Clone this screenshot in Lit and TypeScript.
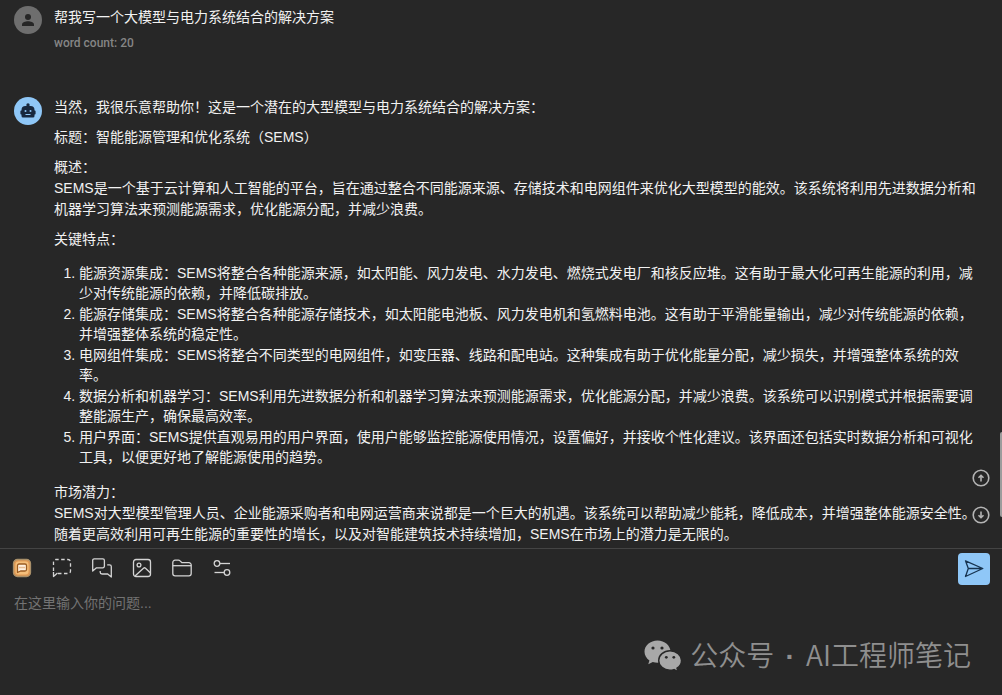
import { LitElement, html, css, svg } from "lit";
import { customElement, property } from "lit/decorators.js";

const FEATURES = [
  "能源资源集成：SEMS将整合各种能源来源，如太阳能、风力发电、水力发电、燃烧式发电厂和核反应堆。这有助于最大化可再生能源的利用，减少对传统能源的依赖，并降低碳排放。",
  "能源存储集成：SEMS将整合各种能源存储技术，如太阳能电池板、风力发电机和氢燃料电池。这有助于平滑能量输出，减少对传统能源的依赖，并增强整体系统的稳定性。",
  "电网组件集成：SEMS将整合不同类型的电网组件，如变压器、线路和配电站。这种集成有助于优化能量分配，减少损失，并增强整体系统的效率。",
  "数据分析和机器学习：SEMS利用先进数据分析和机器学习算法来预测能源需求，优化能源分配，并减少浪费。该系统可以识别模式并根据需要调整能源生产，确保最高效率。",
  "用户界面：SEMS提供直观易用的用户界面，使用户能够监控能源使用情况，设置偏好，并接收个性化建议。该界面还包括实时数据分析和可视化工具，以便更好地了解能源使用的趋势。",
];

const TOOLS = [
  {
    label: "截图提问",
    shape: svg`<path d="M1.500 13V4a2.500 2.500 0 0 1 2.500-2.500H16A2.500 2.500 0 0 1 18.500 4v9a2.500 2.500 0 0 1-2.500 2.500H6" stroke-dasharray="3.500 2.500"/><path d="M1.500 14v4.500L5.500 15"/>`,
  },
  {
    label: "会话",
    shape: svg`<path d="M2.200.8h8.600a1.600 1.600 0 0 1 1.600 1.600v5.800a1.600 1.600 0 0 1-1.600 1.600H4.500L.7 13V2.300A1.500 1.500 0 0 1 2.200.8z"/><path d="M15.200 6.800h2.300a1.800 1.800 0 0 1 1.800 1.800V19l-3.600-3H10a1.800 1.800 0 0 1-1.800-1.800V13"/>`,
  },
  {
    label: "图片",
    shape: svg`<rect x="1.500" y="1.500" width="17" height="17" rx="2.500"/><circle cx="7" cy="7" r="1.900"/><path d="M3 18l8.500-7.800a1.500 1.500 0 0 1 2 0L18.500 15"/>`,
  },
  {
    label: "文件",
    shape: svg`<path d="M.8 15.500v-11A2.300 2.300 0 0 1 3.100 2.200h3.300c.7 0 1.200.2 1.700.7L10 4.700h6.900A2.300 2.300 0 0 1 19.200 7v8.500a2.300 2.300 0 0 1-2.300 2.300H3.100A2.300 2.300 0 0 1 .8 15.500z"/><path d="M.8 7.700h18.400"/>`,
  },
  {
    label: "设置",
    shape: svg`<circle cx="5" cy="5.500" r="2.800"/><path d="M7.800 5.500H18"/><circle cx="15" cy="14.500" r="2.800"/><path d="M2.500 14.500h9.700"/>`,
  },
];

@customElement("chat-turn")
export class ChatTurn extends LitElement {
  @property() role = "user";

  static styles = css`
    :host {
      display: grid;
      grid-template-columns: 28px minmax(0, 1fr);
      column-gap: 12px;
      align-items: start;
    }
    .avatar {
      width: 28px;
      height: 28px;
      border-radius: 50%;
      background: #6e6e6e;
      color: #262626;
      display: grid;
      place-items: center;
    }
    .bot {
      background: #8fc7f7;
      color: #17283f;
    }
  `;

  render() {
    const bot = this.role === "bot";
    return html`
      <div class="avatar ${bot ? "bot" : ""}">
        ${bot
          ? html`<svg width="18" height="18" viewBox="0 0 18 18" aria-hidden="true">
              <circle cx="9" cy="3" r="1.700" fill="currentColor" />
              <path fill="currentColor" d="M8.200 3h1.600v1h1.700a4 4 0 0 1 4 4v.5h.3a.8.8 0 0 1 .8.8v2.400a.8.8 0 0 1-.8.8h-.3v1.500a1.500 1.500 0 0 1-1.500 1.500H4a1.500 1.500 0 0 1-1.500-1.500v-1.500h-.3a.8.8 0 0 1-.8-.8V9.300a.8.8 0 0 1 .8-.8h.3V8a4 4 0 0 1 4-4h1.700z" />
              <circle cx="6.500" cy="9" r="1" fill="#8fc7f7" />
              <circle cx="11.500" cy="9" r="1" fill="#8fc7f7" />
              <path d="M6.500 12.500h5" stroke="#8fc7f7" />
            </svg>`
          : html`<svg width="16" height="16" viewBox="0 0 16 16" fill="currentColor" aria-hidden="true">
              <circle cx="8" cy="5" r="3" />
              <path d="M2 14v-1.500C2 10.500 5.500 9.300 8 9.300s6 1.200 6 3.200V14z" />
            </svg>`}
      </div>
      <div><slot></slot></div>
    `;
  }
}

@customElement("chat-composer")
export class ChatComposer extends LitElement {
  static styles = css`
    :host {
      display: block;
      border-top: 1px solid #444;
      padding: 4px 12px 8px;
    }
    .bar {
      display: flex;
      align-items: flex-start;
      justify-content: space-between;
      height: 32px;
    }
    .tools {
      display: flex;
      align-items: center;
      gap: 20px;
      height: 30px;
    }
    button {
      border: 0;
      padding: 0;
      background: none;
      color: #d4d4d4;
      display: grid;
      place-items: center;
      width: 20px;
      height: 20px;
      cursor: pointer;
    }
    .send {
      width: 32px;
      height: 32px;
      border-radius: 4px;
      background: #8fc7f7;
      color: #173450;
    }
    svg {
      fill: none;
      stroke: currentColor;
      stroke-width: 1.3;
      stroke-linejoin: round;
    }
    textarea {
      display: block;
      box-sizing: border-box;
      width: 100%;
      height: 102px;
      padding: 8px 2px;
      border: 0;
      outline: 0;
      resize: none;
      background: transparent;
      color: #f2f2f2;
      font: 14px/20px "Liberation Sans", "Noto Sans CJK SC", sans-serif;
    }
    textarea::placeholder {
      color: #737373;
    }
  `;

  render() {
    return html`
      <div class="bar">
        <div class="tools">
          <button aria-label="助手">
            <svg width="20" height="20" viewBox="0 0 20 20" aria-hidden="true">
              <rect x="1.500" y="1.500" width="17" height="17" rx="4" fill="#e29a55" stroke="#a9906a" />
              <rect x="3.500" y="3.500" width="13" height="13" rx="3" fill="#f4bf7b" stroke="none" />
              <path d="M7 6h6a1.500 1.500 0 0 1 1.500 1.500v4A1.500 1.500 0 0 1 13 13H8.500L5.500 14.500v-7A1.500 1.500 0 0 1 7 6z" fill="#fff0df" stroke="#9a5b22" />
              <path d="M7.500 9.500h5" stroke="#d08a48" stroke-dasharray="1 1" />
            </svg>
          </button>
          ${TOOLS.map(
            (t) => html`<button aria-label=${t.label}>
              <svg width="20" height="20" viewBox="0 0 20 20" aria-hidden="true">${t.shape}</svg>
            </button>`
          )}
        </div>
        <button class="send" aria-label="发送">
          <svg width="20" height="20" viewBox="0 0 20 20" aria-hidden="true">
            <path d="M1.500 1.800L18.800 9.500L1.500 17.500L4.300 9.500zM4.300 9.500H18" />
          </svg>
        </button>
      </div>
      <textarea aria-label="问题" placeholder="在这里输入你的问题..."></textarea>
    `;
  }
}

@customElement("app-root")
export class AppRoot extends LitElement {
  static styles = css`
    :host {
      display: flex;
      flex-direction: column;
      position: relative;
      height: 100vh;
      overflow: hidden;
      background: #272727;
      color: #f2f2f2;
      font: 14px/21px "Liberation Sans", "Noto Sans CJK SC", sans-serif;
    }
    main {
      flex: 1;
      min-height: 0;
      position: relative;
      overflow: hidden;
      padding: 6px 26px 0 14px;
      display: flex;
      flex-direction: column;
      gap: 45px;
    }
    p {
      margin: 0 0 9px;
    }
    .question {
      margin: 1px 0 6px;
    }
    .count {
      margin: 0;
      font-size: 12px;
      line-height: 18px;
      font-weight: 500;
      font-family: Roboto, sans-serif;
      color: #858585;
    }
    ol {
      margin: 13px 0 15px;
      padding-left: 25px;
      line-height: 20px;
      display: grid;
      row-gap: 1px;
    }
    .jump {
      position: absolute;
      right: 12px;
      bottom: 24px;
      display: grid;
      gap: 19px;
    }
    .jump button {
      width: 18px;
      height: 18px;
      padding: 0;
      border: 0;
      background: none;
      color: #b4b4b4;
    }
    .jump svg {
      display: block;
      fill: none;
      stroke: currentColor;
      stroke-width: 1.6;
    }
    .thumb {
      position: absolute;
      right: 0;
      bottom: 31px;
      width: 2px;
      height: 85px;
      border-radius: 2px 0 0 2px;
      background: #9c9c9c;
    }
    .mark {
      position: absolute;
      right: 31px;
      bottom: 18px;
      display: flex;
      align-items: center;
      gap: 8px;
      color: #8f8f8f;
      font: 350 28px/40px "Noto Sans CJK SC", sans-serif;
      pointer-events: none;
    }
    .mark svg {
      display: block;
    }
    .dot {
      margin: 0 5px;
      font-family: "Liberation Sans", sans-serif;
      font-weight: 700;
    }
  `;

  render() {
    return html`
      <main>
        <chat-turn role="user">
          <p class="question">帮我写一个大模型与电力系统结合的解决方案</p>
          <p class="count">word count: 20</p>
        </chat-turn>
        <chat-turn role="bot">
          <p>当然，我很乐意帮助你！这是一个潜在的大型模型与电力系统结合的解决方案：</p>
          <p>标题：智能能源管理和优化系统（SEMS）</p>
          <p>概述：<br />SEMS是一个基于云计算和人工智能的平台，旨在通过整合不同能源来源、存储技术和电网组件来优化大型模型的能效。该系统将利用先进数据分析和机器学习算法来预测能源需求，优化能源分配，并减少浪费。</p>
          <p>关键特点：</p>
          <ol>
            ${FEATURES.map((f) => html`<li>${f}</li>`)}
          </ol>
          <p>市场潜力：<br />SEMS对大型模型管理人员、企业能源采购者和电网运营商来说都是一个巨大的机遇。该系统可以帮助减少能耗，降低成本，并增强整体能源安全性。随着更高效利用可再生能源的重要性的增长，以及对智能建筑技术持续增加，SEMS在市场上的潜力是无限的。</p>
        </chat-turn>
        <div class="jump">
          <button aria-label="向上">
            <svg width="18" height="18" viewBox="0 0 18 18" aria-hidden="true">
              <circle cx="9" cy="9" r="7.800" />
              <path d="M9 12.500V6.500M6.500 8.800L9 6.300l2.500 2.500" />
            </svg>
          </button>
          <button aria-label="向下">
            <svg width="18" height="18" viewBox="0 0 18 18" aria-hidden="true">
              <circle cx="9" cy="9" r="7.800" />
              <path d="M9 5.500v6M6.500 9.200L9 11.700l2.500-2.500" />
            </svg>
          </button>
        </div>
        <div class="thumb"></div>
      </main>
      <chat-composer></chat-composer>
      <div class="mark">
        <svg width="38" height="32" viewBox="0 0 38 32" aria-hidden="true">
          <path fill="#a8a8a8" d="M13.500.5C6.300.5.500 5.500.500 11.700c0 3.500 1.900 6.600 4.900 8.700L4.300 24.300l4.500-2.300c1.500.4 3.100.700 4.700.7C20.700 22.700 26.500 17.700 26.500 11.700S20.700.5 13.500.5z" />
          <path fill="#a8a8a8" stroke="#272727" stroke-width="1.400" d="M26 10.800c-6.300 0-11.300 4.300-11.300 9.700s5 9.700 11.300 9.700c1.400 0 2.800-.2 4-.600l4 2-1-3.400c2.700-1.800 4.500-4.600 4.500-7.700 0-5.400-5.200-9.700-11.500-9.700z" />
          <g fill="#272727">
            <circle cx="9" cy="8" r="1.600" />
            <circle cx="18" cy="8" r="1.600" />
            <circle cx="22.300" cy="17.300" r="1.400" />
            <circle cx="29.800" cy="17.300" r="1.400" />
          </g>
        </svg>
        <span>公众号 <span class="dot">·</span> AI工程师笔记</span>
      </div>
    `;
  }
}
